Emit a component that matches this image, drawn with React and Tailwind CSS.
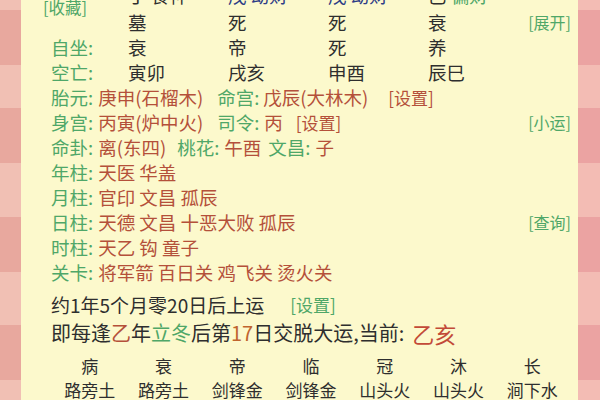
import React from "react";

const G = "text-[#4fa768]";
const R = "text-[#b4503a]";
const N = "text-[#2d3d86]";
const D = "text-[#2e2e2e]";

function Row({ label, children, right }) {
  return (
    <div className="flex h-[25px] items-center leading-[25px] whitespace-nowrap">
      <span className={G}>{label}:</span>
      <span className="ml-[5px] flex items-center">{children}</span>
      {right ? (
        <span className={`ml-auto text-[16px] ${G}`}>[{right}]</span>
      ) : null}
    </div>
  );
}

export default function App() {
  const stripe =
    "bg-[linear-gradient(180deg,#f1c0b4_0px,#f1c0b4_10px,#e8a89e_10px,#e8a89e_65px,#f1c0b4_65px,#f1c0b4_108px,#e8a89e_108px,#e8a89e_163px,#f1c0b4_163px,#f1c0b4_217px,#e8a89e_217px,#e8a89e_272px,#f1c0b4_272px,#f1c0b4_325px,#e8a89e_325px,#e8a89e_380px,#f1c0b4_380px,#f1c0b4_400px)]";
  const stripeR =
    "bg-[linear-gradient(180deg,#f3bcb4_0px,#f3bcb4_10px,#eba3a2_10px,#eba3a2_65px,#f3bcb4_65px,#f3bcb4_108px,#eba3a2_108px,#eba3a2_163px,#f3bcb4_163px,#f3bcb4_217px,#eba3a2_217px,#eba3a2_272px,#f3bcb4_272px,#f3bcb4_325px,#eba3a2_325px,#eba3a2_380px,#f3bcb4_380px,#f3bcb4_400px)]";

  const top = [
    [["丁", D], ["食神", D]],
    [["戊", N], ["劫财", N]],
    [["戊", N], ["劫财", N]],
    [["巳", D], ["偏财", G]],
  ];

  const bottom = [
    ["病", "路旁土"],
    ["衰", "路旁土"],
    ["帝", "剑锋金"],
    ["临", "剑锋金"],
    ["冠", "山头火"],
    ["沐", "山头火"],
    ["长", "涧下水"],
  ];

  return (
    <div
      className="flex h-[400px] w-[600px] overflow-hidden"
      style={{ fontFamily: '"Noto Sans CJK SC", "Noto Sans", sans-serif' }}
    >
      <div className={`w-[21px] shrink-0 ${stripe}`} />
      <div className="w-[557px] shrink-0 overflow-hidden bg-[#fcf9cc] pl-[30px] pr-[7px] text-[18.5px] text-[#2e2e2e]">
        <div className="mt-[-15px] grid grid-cols-[77px_100px_100px_100px_100px_1fr] auto-rows-[25px] items-center leading-[25px] whitespace-nowrap">
          <div className={`row-span-2 ml-[-8px] mt-[-6px] self-center text-[16.5px] ${G}`}>
            [收藏]
          </div>
          {top.map((c, i) => (
            <div key={i} className="mt-[-4px]">
              <span className={c[0][1]}>{c[0][0]}</span>{" "}
              <span className={c[1][1]}>{c[1][0]}</span>
            </div>
          ))}
          <div />
          <div>墓</div>
          <div>死</div>
          <div>死</div>
          <div>衰</div>
          <div className={`text-right text-[16px] ${G}`}>[展开]</div>
          <div className={G}>自坐:</div>
          <div>衰</div>
          <div>帝</div>
          <div>死</div>
          <div>养</div>
          <div />
          <div className={G}>空亡:</div>
          <div>寅卯</div>
          <div>戌亥</div>
          <div>申酉</div>
          <div>辰巳</div>
          <div />
        </div>

        <Row label="胎元">
          <span className={R}>庚申(石榴木)</span>
          <span className={`ml-[14px] ${G}`}>命宫:</span>
          <span className={`ml-[4px] ${R}`}>戊辰(大林木)</span>
          <span className={`ml-[20px] text-[17px] ${R}`}>[设置]</span>
        </Row>
        <Row label="身宫" right="小运">
          <span className={R}>丙寅(炉中火)</span>
          <span className={`ml-[14px] ${G}`}>司令:</span>
          <span className={`ml-[5px] ${R}`}>丙</span>
          <span className={`ml-[13px] text-[17px] ${R}`}>[设置]</span>
        </Row>
        <Row label="命卦">
          <span className={R}>离(东四)</span>
          <span className={`ml-[11px] ${G}`}>桃花:</span>
          <span className={`ml-[5px] ${R}`}>午酉</span>
          <span className={`ml-[7px] ${G}`}>文昌:</span>
          <span className={`ml-[5px] ${R}`}>子</span>
        </Row>
        <Row label="年柱">
          <span className={R}>天医 华盖</span>
        </Row>
        <Row label="月柱">
          <span className={R}>官印 文昌 孤辰</span>
        </Row>
        <Row label="日柱" right="查询">
          <span className={R}>天德 文昌 十恶大败 孤辰</span>
        </Row>
        <Row label="时柱">
          <span className={R}>天乙 钩 童子</span>
        </Row>
        <Row label="关卡">
          <span className={R}>将军箭 百日关 鸡飞关 烫火关</span>
        </Row>

        <div className="mt-[6px] flex h-[28px] items-center whitespace-nowrap text-[19px] leading-[28px]">
          <span>约1年5个月零20日后上运</span>
          <span className={`ml-[26px] text-[17px] ${G}`}>[设置]</span>
        </div>
        <div className="flex h-[28px] items-center whitespace-nowrap text-[20px] leading-[28px]">
          <span>即每逢</span>
          <span className={R}>乙</span>
          <span>年</span>
          <span className={G}>立冬</span>
          <span>后第</span>
          <span className="text-[#c0652e]">17</span>
          <span>日交脱大运,当前:</span>
          <span className="ml-[8px] text-[22px] text-[#c24a38]">乙亥</span>
        </div>

        <div className="ml-[2px] mt-[7px] grid w-[516px] grid-cols-7 text-center text-[17px] leading-[24px]">
          {bottom.map((b, i) => (
            <div key={"a" + i}>{b[0]}</div>
          ))}
          {bottom.map((b, i) => (
            <div key={"b" + i}>{b[1]}</div>
          ))}
        </div>
      </div>
      <div className={`w-[22px] shrink-0 ${stripeR}`} />
    </div>
  );
}
